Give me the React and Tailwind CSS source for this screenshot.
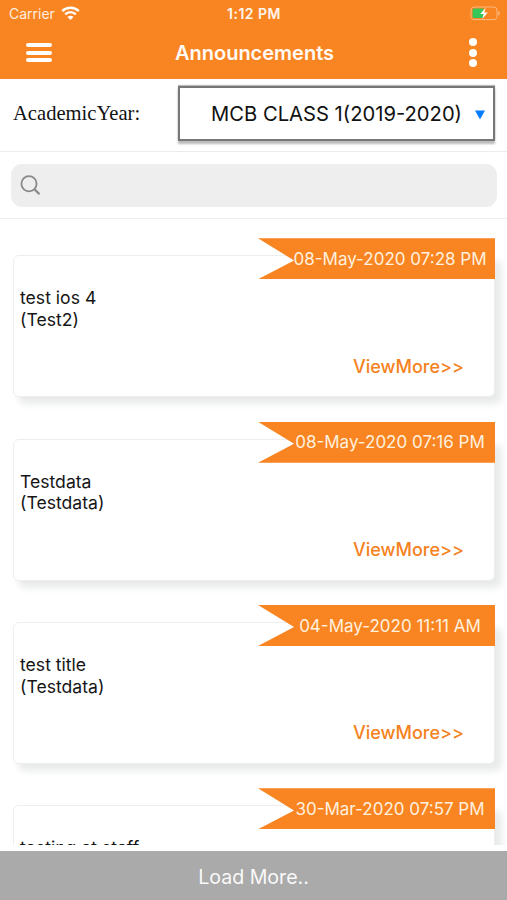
import React from "react";

const announcements = [
  { date: "08-May-2020 07:28 PM", title: "test ios 4", group: "(Test2)" },
  { date: "08-May-2020 07:16 PM", title: "Testdata", group: "(Testdata)" },
  { date: "04-May-2020 11:11 AM", title: "test title", group: "(Testdata)" },
  { date: "30-Mar-2020 07:57 PM", title: "testing at staff" },
];

const WifiIcon = () => (
  <svg width="19" height="15" viewBox="0 0 19 15" fill="none" stroke="#fff">
    <path d="M1.2 5.2a11.8 11.8 0 0 1 16.6 0" strokeWidth="2.4" />
    <path d="M4.2 8.4a7.5 7.5 0 0 1 10.6 0" strokeWidth="2.3" />
    <path d="M9.5 14 6.5 11a4.2 4.2 0 0 1 6 0Z" fill="#fff" stroke="none" />
  </svg>
);

const BatteryIcon = () => (
  <svg width="31" height="15" viewBox="0 0 31 15" fill="none">
    <rect x="1" y="1" width="26" height="12.6" rx="3" stroke="#fbb981" />
    <path d="M28.4 5.2v4.2c1.6-.5 1.6-3.7 0-4.2Z" fill="#fbc79b" />
    <path d="M4.2 2.6h9.3v9.5H4.2a1.6 1.6 0 0 1-1.6-1.6V4.2a1.6 1.6 0 0 1 1.6-1.6Z" fill="#35c759" />
    <path d="m15.7 1.8-5.5 6.3h3.5l-1.4 4.9 5.5-6.5h-3.5Z" fill="#fff" />
  </svg>
);

const SearchIcon = () => (
  <svg width="21" height="21" viewBox="0 0 21 21" fill="none" stroke="#8a8a8a">
    <circle cx="9" cy="8.8" r="7.6" strokeWidth="1.8" />
    <path d="m14.3 14.1 5.2 5.2" strokeWidth="2.2" />
  </svg>
);

const Header = () => (
  <header className="h-[79px] shrink-0 bg-[#f98522] text-white">
    <div className="flex h-[27px] items-center pl-[9px] pr-[6px]">
      <div className="flex flex-1 items-center gap-[6px]">
        <span className="text-[14px] text-[#ffeedf]">Carrier</span>
        <WifiIcon />
      </div>
      <span className="relative -left-px text-[14px] font-semibold tracking-[0.5px] text-[#fff6ee]">1:12 PM</span>
      <div className="flex flex-1 justify-end">
        <BatteryIcon />
      </div>
    </div>
    <div className="flex h-[51px] items-center pl-[26px] pr-[30px]">
      <div className="flex flex-1 flex-col gap-[3.5px]">
        <i className="h-1 w-[26px] rounded-full bg-white" />
        <i className="h-1 w-[26px] rounded-full bg-white" />
        <i className="h-1 w-[26px] rounded-full bg-white" />
      </div>
      <h1 className="relative left-[3px] text-[20px] font-semibold text-[#fffaf5]">Announcements</h1>
      <div className="flex flex-1 flex-col items-end gap-[2.5px]">
        <i className="size-2 rounded-full bg-white" />
        <i className="size-2 rounded-full bg-white" />
        <i className="size-2 rounded-full bg-white" />
      </div>
    </div>
  </header>
);

const AnnouncementCard = ({ date, title, group }) => (
  <article className="relative mb-[41.33px] h-[142px] shrink-0 rounded-[6px] border border-[#eeeeee] bg-white pl-[6px] pt-[31px] shadow-[6px_6px_7px_1px_#e9ebeb]">
    <div className="absolute -right-px -top-[18px] flex h-[41px] w-[237px] items-center justify-center bg-[#f98522] pl-[27px] pt-[2px] text-[17px] text-[#fff0df] [clip-path:polygon(0_0,100%_0,100%_100%,0_100%,36px_54%)]">
      <span className="whitespace-nowrap">{date}</span>
    </div>
    <p className="text-[17.6px] leading-[21.7px] text-[#151515]">{title}</p>
    {group && <p className="text-[17.6px] leading-[21.7px] text-[#151515]">{group}</p>}
    <a className="absolute bottom-[17.5px] right-[30px] text-[18px] font-medium leading-6 text-[#f58220]">
      ViewMore&gt;&gt;
    </a>
  </article>
);

export default function App() {
  return (
    <div className="flex h-[900px] w-[507px] flex-col overflow-hidden bg-white font-['Inter',sans-serif]">
      <Header />

      {/* Academic year */}
      <div className="flex h-[73px] shrink-0 items-center justify-between border-b border-[#ececec] pl-[13px] pr-[12px] pb-[3px]">
        <label className="font-['Liberation_Serif',serif] text-[20.6px] text-[#111]">AcademicYear:</label>
        <div className="flex h-[55px] w-[317px] items-center justify-end border-2 border-[#777] pr-[8px] pt-[2px] shadow-[0_3px_2px_#bbb,0_-1px_1px_#bbb]">
          <span className="whitespace-nowrap text-[20.2px] text-[#111]">MCB CLASS 1(2019-2020)</span>
          <svg className="ml-[13px]" width="10" height="10" viewBox="0 0 10 10">
            <path d="M0 .5h10L5 9.5Z" fill="#087cff" />
          </svg>
        </div>
      </div>

      {/* Search */}
      <div className="h-[67px] shrink-0 border-b border-[#eeeeee] px-[10.5px] pt-[11.5px]">
        <div className="flex h-[43px] items-center rounded-[11px] bg-[#eeeeee] pl-[9px]">
          <SearchIcon />
        </div>
      </div>

      {/* Announcements */}
      <main className="flex h-[626px] shrink-0 flex-col overflow-hidden pl-[13px] pr-[12px] pt-[36.3px]">
        {announcements.map((item) => (
          <AnnouncementCard key={item.date} {...item} />
        ))}
      </main>

      <button className="mt-auto h-[49px] shrink-0 bg-[#aaaaaa] pt-[3px] text-[19.6px] leading-6 text-[#f9f9f9]">Load More..</button>
    </div>
  );
}
